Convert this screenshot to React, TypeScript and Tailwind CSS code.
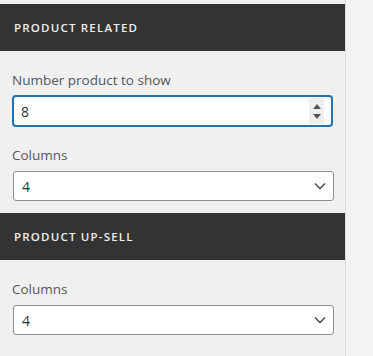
function SectionHeader({ title }: { title: string }) {
  return (
    <div className="h-[47px] bg-[#333333] flex items-center px-[14px]">
      <span className="text-[11.5px] font-semibold tracking-[1.2px] text-[#f0f0f0] uppercase">{title}</span>
    </div>
  );
}

function Chevron() {
  return (
    <svg width="12" height="8" viewBox="0 0 12 8" fill="none">
      <path d="M1 1.5 L6 6.5 L11 1.5" stroke="#50575e" strokeWidth="1.6" />
    </svg>
  );
}

function SelectField({ label, value }: { label: string; value: string }) {
  return (
    <div>
      <div className="text-[13.5px] leading-5 text-[#50575e]">{label}</div>
      <div className="mt-[6px] ml-[1px] h-[30px] w-[321px] bg-white border border-[#8c8f94] rounded-[3px] flex items-center justify-between pl-[8px] pr-[7px]">
        <span className="text-[14px] text-[#2c3338]">{value}</span>
        <Chevron />
      </div>
    </div>
  );
}

export default function App() {
  return (
    <div className="w-[373px] h-[356px] flex bg-[#f3f3f5] overflow-hidden" style={{ fontFamily: '"Open Sans", "Noto Sans", sans-serif' }}>
      <div className="w-[345px] bg-[#f0f0f1] pt-[4px] border-r border-[#dcdcde] box-content">
        <SectionHeader title="Product Related" />

        {/* Number product to show */}
        <div className="pl-[12px] pt-[19px]">
          <div className="text-[13.5px] leading-5 text-[#50575e]">Number product to show</div>
          <div className="mt-[5px] h-[32px] w-[321px] bg-white border-2 border-[#2271b1] rounded-[4px] flex items-center justify-between pl-[7px] pr-[7px]">
            <span className="text-[14px] text-[#2c3338]">8</span>
            <div className="h-[26px] w-[15px] bg-[#efefef] flex flex-col items-center justify-center gap-[5px]">
              <div className="w-0 h-0 border-l-[4px] border-r-[4px] border-b-[5px] border-l-transparent border-r-transparent border-b-[#555]" />
              <div className="w-0 h-0 border-l-[4px] border-r-[4px] border-t-[5px] border-l-transparent border-r-transparent border-t-[#555]" />
            </div>
          </div>
        </div>

        <div className="pl-[12px] pt-[18px]">
          <SelectField label="Columns" value="4" />
        </div>

        <div className="mt-[12px]">
          <SectionHeader title="Product Up-sell" />
        </div>

        <div className="pl-[12px] pt-[19px]">
          <SelectField label="Columns" value="4" />
        </div>
      </div>
    </div>
  );
}
